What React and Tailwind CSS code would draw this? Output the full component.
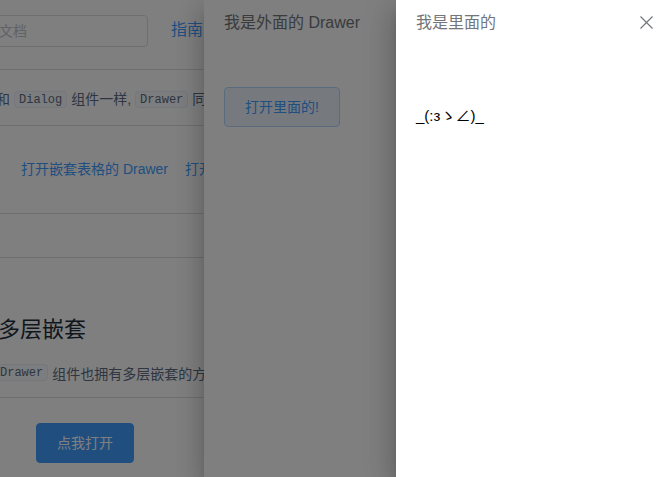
import React from 'react';

const drawerShadow =
  'shadow-[0_8px_10px_-5px_rgba(0,0,0,0.2),0_16px_24px_2px_rgba(0,0,0,0.14),0_6px_30px_5px_rgba(0,0,0,0.12)]';

const Code = ({ children }) => (
  <code className="inline-flex items-center h-[17px] mx-[4px] px-[4px] bg-[#f9fafc] border border-[#eaeefb] rounded-[4px] text-[12px] font-['Liberation_Mono',monospace] text-[#5e6d82]">
    {children}
  </code>
);

const App = () => {
  return (
    <div className="relative w-[667px] h-[477px] overflow-hidden bg-white font-['Liberation_Sans','Noto_Sans_CJK_SC',sans-serif]">
      {/* Page underneath */}
      <div className="w-[900px]">
        {/* Header */}
        <div className="h-[70px] border-b border-[#dcdfe6] flex items-start pt-[15px]">
          <div className="-ml-[80px] w-[228px] h-[32px] border border-[#dcdfe6] rounded-[4px] flex items-center pl-[50px] text-[14px] text-[#c0c4cc]">
            搜索文档
          </div>
          <span className="ml-[23px] mt-[5px] text-[16px] leading-[20px] text-[#409eff]">指南</span>
        </div>

        {/* Description */}
        <div className="h-[56px] border-b border-[#dcdfe6] flex items-center -ml-[4px] pt-[4px] text-[14px] text-[#5e6d82] whitespace-nowrap">
          和<Code>Dialog</Code>组件一样,<Code>Drawer</Code>同样可以使用在嵌套的场景中
        </div>

        {/* Demo buttons */}
        <div className="h-[88px] border-b border-[#dcdfe6] flex items-center pl-[21px] gap-[17px] text-[14px] text-[#409eff] whitespace-nowrap">
          <span>打开嵌套表格的 Drawer</span>
          <span>打开嵌套 Form 的 Drawer</span>
        </div>
        <div className="h-[44px] border-b border-[#dcdfe6]"></div>

        {/* Section */}
        <h3 className="-ml-[2px] mt-[57px] text-[22px] leading-[30px] text-[#1f2f3d] font-normal">多层嵌套</h3>
        <div className="mt-[19px] h-[34px] border-b border-[#dcdfe6] -ml-[9px] flex items-start text-[14px] leading-[20px] text-[#5e6d82] whitespace-nowrap">
          <Code>Drawer</Code>组件也拥有多层嵌套的方法，同样在多层嵌套下
        </div>
        <div className="pl-[36px] pt-[25px]">
          <button className="w-[98px] h-[40px] rounded-[4px] bg-[#409eff] border border-[#409eff] text-white text-[14px]">
            点我打开
          </button>
        </div>
      </div>

      {/* Outer drawer */}
      <div className={`absolute top-0 bottom-0 left-[204px] right-0 bg-white ${drawerShadow}`}>
        <div className="pl-[20px] pt-[14px] text-[16px] leading-[17px] text-[#72767b]">我是外面的 Drawer</div>
        <div className="pl-[20px] pt-[56px]">
          <button className="w-[116px] h-[40px] rounded-[4px] bg-[#ecf5ff] border border-[#b3d8ff] text-[#409eff] text-[14px]">
            打开里面的!
          </button>
        </div>
      </div>

      {/* Modal overlay */}
      <div className="absolute inset-0 bg-black/50"></div>

      {/* Inner drawer */}
      <div className={`absolute top-0 bottom-0 left-[396px] right-0 bg-white ${drawerShadow}`}>
        <div className="flex items-center justify-between pl-[20px] pr-[14px] pt-[14px]">
          <span className="text-[16px] leading-[17px] text-[#72767b]">我是里面的</span>
          <svg width="13" height="13" viewBox="0 0 13 13" className="text-[#72767b]">
            <path d="M0.5 0.5L12.5 12.5M12.5 0.5L0.5 12.5" stroke="currentColor" strokeWidth="1.2" fill="none" />
          </svg>
        </div>
        <p className="pl-[20px] pt-[77px] text-[15px] leading-[16px] text-black">_(:зゝ∠)_</p>
      </div>
    </div>
  );
};

export default App;
